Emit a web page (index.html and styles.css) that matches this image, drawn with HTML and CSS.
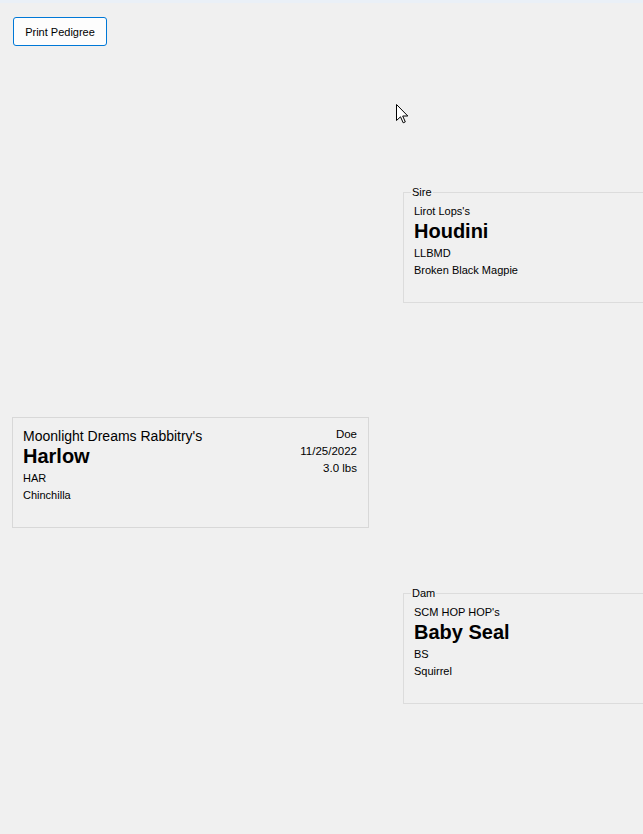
FILE: index.html
```html
<!DOCTYPE html>
<html lang="en">
<head>
<meta charset="utf-8">
<title>Pedigree</title>
<link rel="stylesheet" href="styles.css">
</head>
<body>
<div class="topbar"></div>
<div class="toolbar">
  <button class="btn" type="button">Print Pedigree</button>
</div>
<div class="pedigree">
  <div class="subject-col">
    <div class="card">
      <div class="info">
        <div class="owner owner-lg">Moonlight Dreams Rabbitry's</div>
        <div class="name">Harlow</div>
        <div class="line">HAR</div>
        <div class="line">Chinchilla</div>
      </div>
      <div class="meta">
        <div class="line">Doe</div>
        <div class="line">11/25/2022</div>
        <div class="line">3.0 lbs</div>
      </div>
    </div>
  </div>
  <div class="parents-col">
    <fieldset class="parent">
      <legend>Sire</legend>
      <div class="owner">Lirot Lops's</div>
      <div class="name">Houdini</div>
      <div class="line">LLBMD</div>
      <div class="line">Broken Black Magpie</div>
    </fieldset>
    <fieldset class="parent dam">
      <legend>Dam</legend>
      <div class="owner">SCM HOP HOP's</div>
      <div class="name">Baby Seal</div>
      <div class="line">BS</div>
      <div class="line">Squirrel</div>
    </fieldset>
  </div>
</div>
<svg class="cursor" width="13" height="20" viewBox="0 0 13 20" aria-hidden="true">
  <path d="M0.5 0.5 L0.5 16.5 L4.5 12.8 L7.2 18.8 L9.3 17.9 L6.7 12 L11.8 12 Z" fill="#ffffff" stroke="#000000" stroke-width="1" stroke-linejoin="miter"/>
</svg>
</body>
</html>
```
FILE: styles.css
```css
html, body {
  margin: 0;
  padding: 0;
  overflow: hidden;
}
body {
  width: 643px;
  height: 834px;
  background: #f0f0f0;
  font-family: "Liberation Sans", Arial, sans-serif;
  font-size: 11px;
  color: #000;
  position: relative;
}
.topbar {
  height: 3px;
  background: #eaf0f7;
}
.toolbar {
  padding: 14px 0 0 13px;
  height: 29px;
}
.btn {
  box-sizing: border-box;
  width: 94px;
  height: 29px;
  margin: 0;
  padding: 0;
  border: 1px solid #0078d7;
  border-radius: 3px;
  background: #fdfdfd;
  font-family: "Liberation Sans", Arial, sans-serif;
  font-size: 11px;
  color: #000;
}
.pedigree {
  display: flex;
  margin-top: 139px;
  padding-left: 12px;
}
.subject-col {
  width: 357px;
  flex: none;
}
.card {
  box-sizing: border-box;
  width: 357px;
  height: 111px;
  margin-top: 232px;
  border: 1px solid #d8d8d8;
  padding: 10px 11px 0 10px;
  display: flex;
  justify-content: space-between;
}
.meta {
  text-align: right;
  margin-top: -2px;
  font-size: 11.5px;
}
.parents-col {
  margin-left: 34px;
  flex: 1;
  display: flex;
  flex-direction: column;
}
.parent {
  box-sizing: border-box;
  width: 240px;
  height: 118px;
  margin: 0;
  padding: 4px 0 0 10px;
  border: 1px solid #dcdcdc;
  border-right: none;
}
.parent legend {
  font-size: 11px;
  line-height: 14px;
  padding: 0 1px;
  margin-left: -3px;
}
.dam {
  margin-top: 283px;
}
.owner {
  line-height: 17px;
}
.owner-lg {
  font-size: 14px;
  line-height: 18px;
  margin-top: -1px;
}
.name {
  font-size: 20px;
  font-weight: bold;
  line-height: 22px;
  margin-bottom: 3px;
}
.line {
  line-height: 17px;
}
.cursor {
  position: absolute;
  left: 396px;
  top: 104px;
}
```
